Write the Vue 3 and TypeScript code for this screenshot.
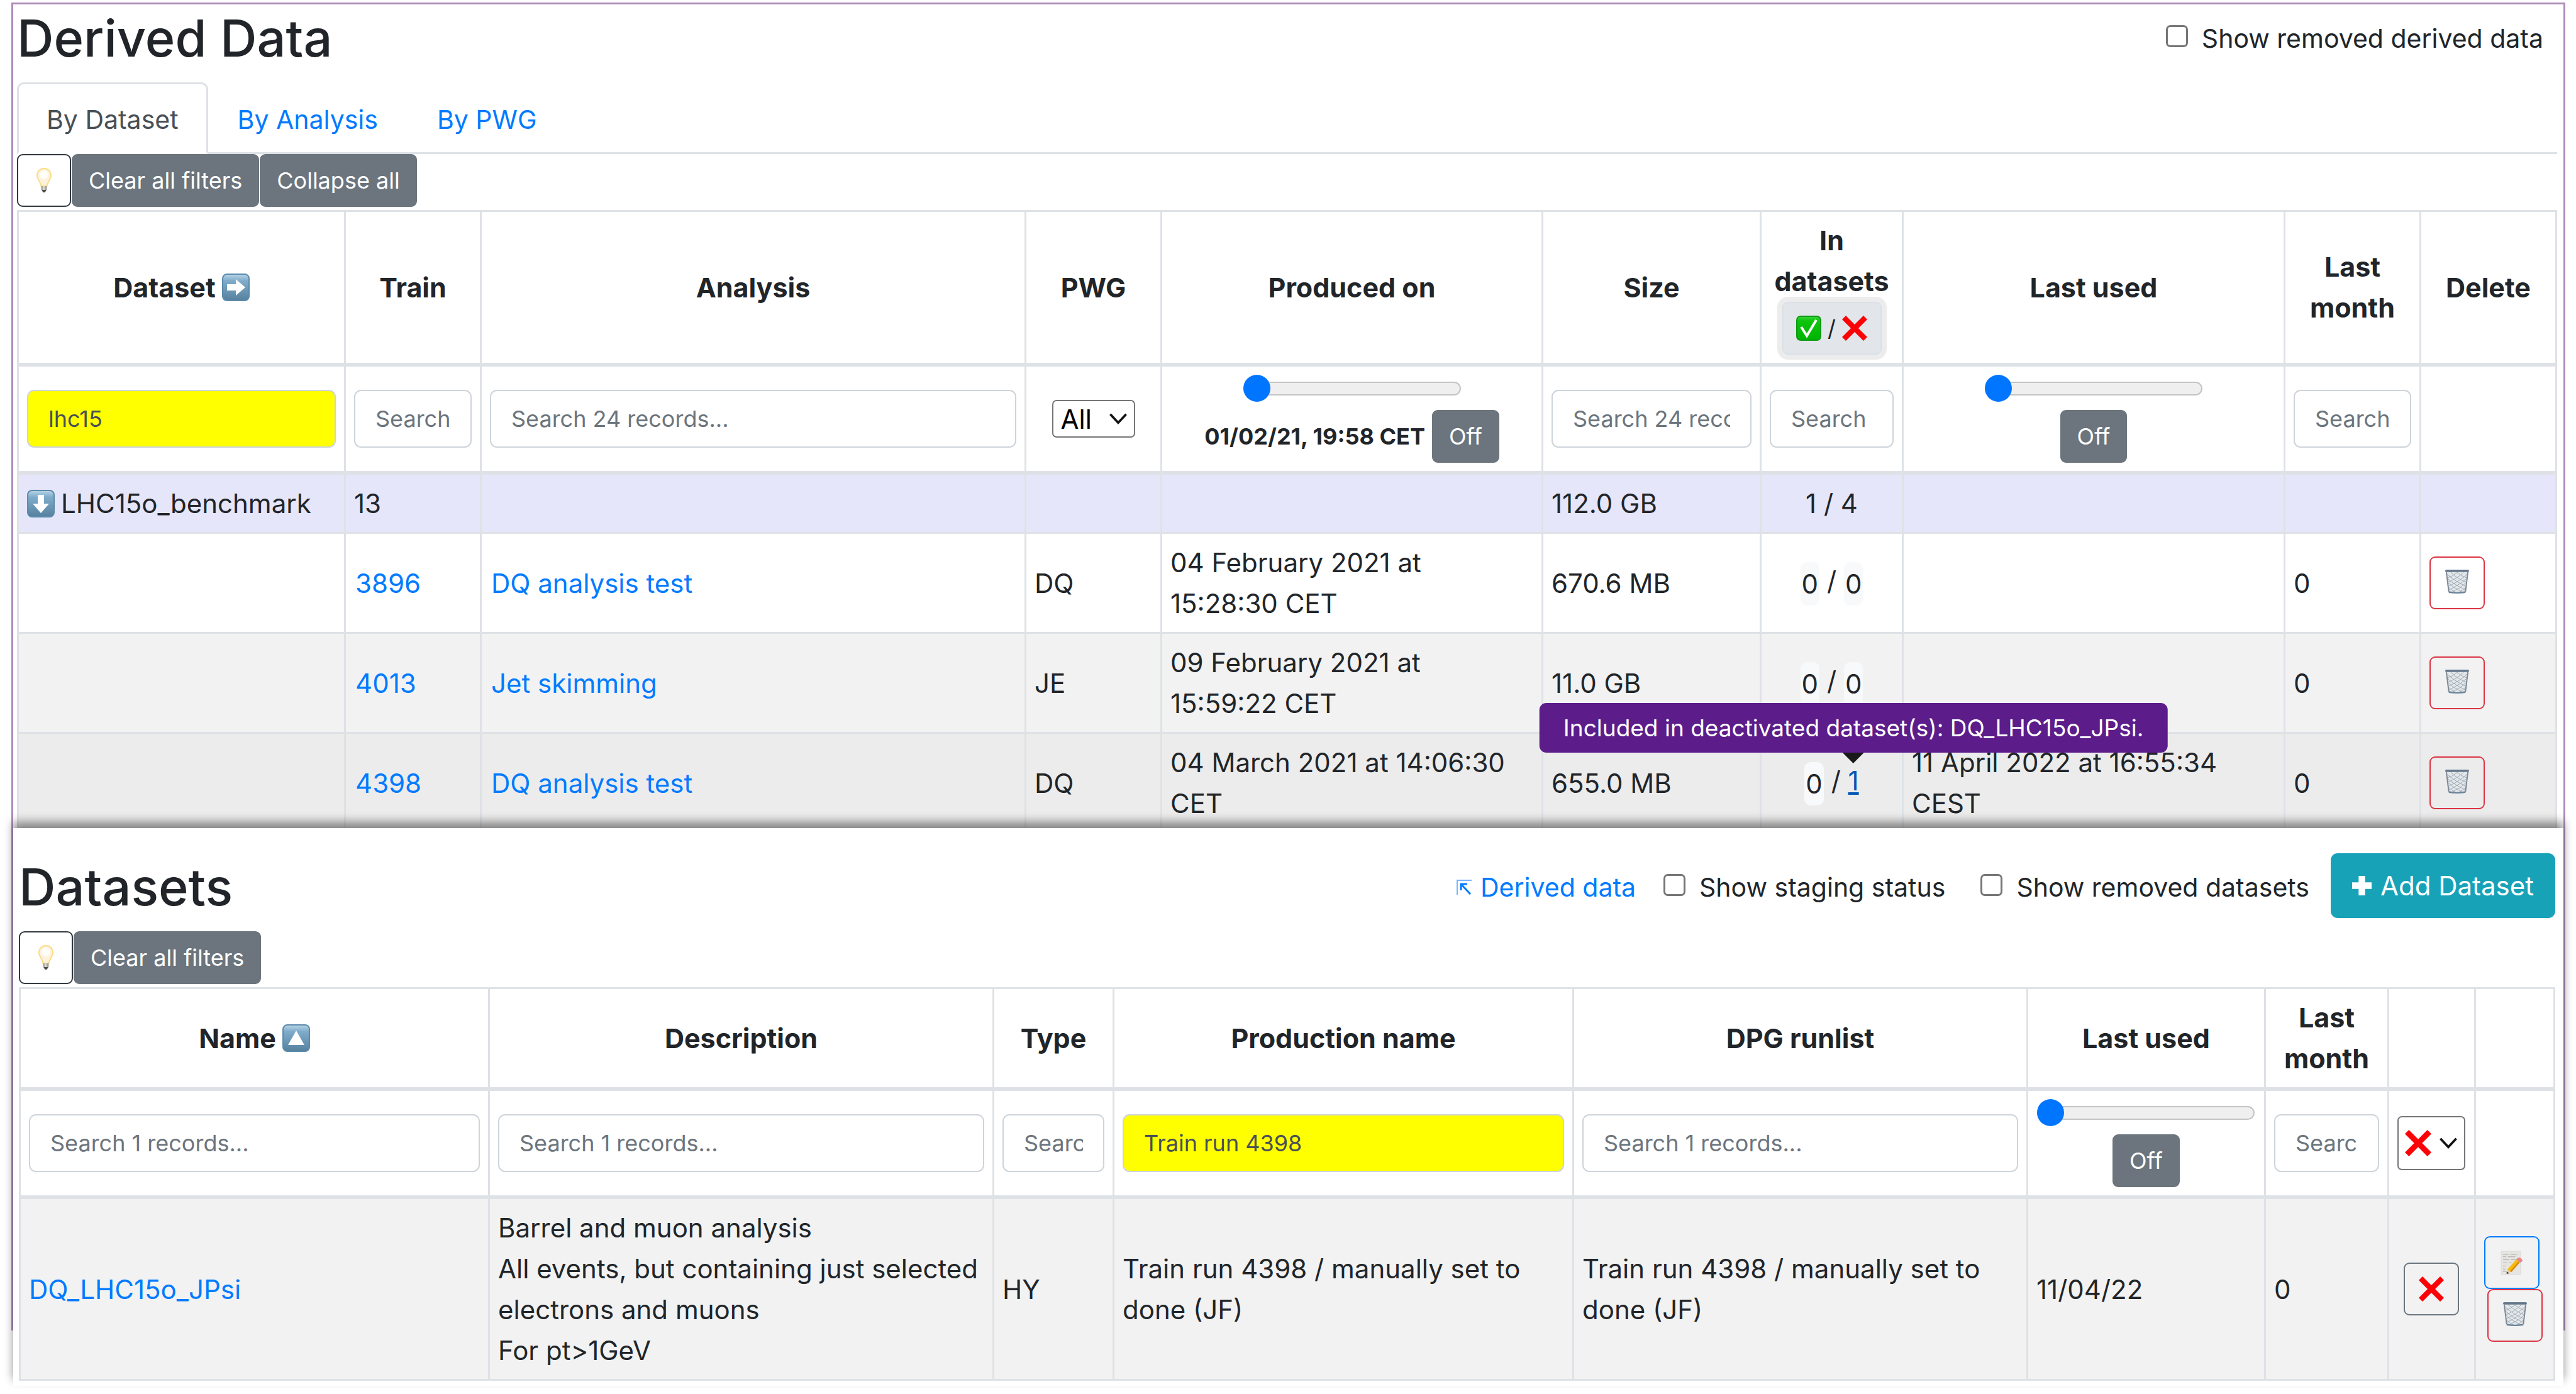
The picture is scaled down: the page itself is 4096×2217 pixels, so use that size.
<script setup lang="ts">
import { h, ref, type FunctionalComponent } from 'vue'

interface DerivedRow {
  train: string
  analysis: string
  pwg: string
  produced: string
  size: string
  active: string
  inactive: string
  tooltip?: string
  lastUsed: string
  lastMonth: string
}

const derivedCols = [520, 216, 866, 216, 606, 347, 226, 607, 216, 216]
const datasetCols = [746, 802, 191, 731, 722, 378, 196, 138, 126]

function shares(cols: number[]): string[] {
  const total = cols.reduce((a, b) => a + b, 0)
  return cols.map((c) => `${(c / total) * 100}%`)
}

const rows: DerivedRow[] = [
  { train: '3896', analysis: 'DQ analysis test', pwg: 'DQ', produced: '04 February 2021 at 15:28:30 CET', size: '670.6 MB', active: '0', inactive: '0', lastUsed: '', lastMonth: '0' },
  { train: '4013', analysis: 'Jet skimming', pwg: 'JE', produced: '09 February 2021 at 15:59:22 CET', size: '11.0 GB', active: '0', inactive: '0', lastUsed: '', lastMonth: '0' },
  { train: '4398', analysis: 'DQ analysis test', pwg: 'DQ', produced: '04 March 2021 at 14:06:30 CET', size: '655.0 MB', active: '0', inactive: '1', tooltip: 'Included in deactivated dataset(s): DQ_LHC15o_JPsi.', lastUsed: '11 April 2022 at 16:55:34 CEST', lastMonth: '0' },
]

const datasetFilter = ref('lhc15')
const productionFilter = ref('Train run 4398')
const producedOn = ref(0)
const derivedLastUsed = ref(0)
const datasetLastUsed = ref(0)

const CrossIcon: FunctionalComponent = () =>
  h('svg', { viewBox: '0 0 40 40', 'aria-hidden': 'true' }, [
    h('path', { d: 'M6 0 20 14 34 0 40 6 26 20 40 34 34 40 20 26 6 40 0 34 14 20 0 6Z', fill: '#fb0207' }),
  ])

const BulbIcon: FunctionalComponent = () =>
  h('svg', { viewBox: '0 0 24 40', 'aria-hidden': 'true' }, [
    h('path', { d: 'M12 1C5.500 1 1 5.700 1 12c0 6 5 9.500 6.500 17h9C18 21.500 23 18 23 12 23 5.700 18.500 1 12 1Z', fill: '#fdf3dc', stroke: '#fbdc86', 'stroke-width': 2 }),
    h('ellipse', { cx: 12, cy: 11, rx: 7, ry: 7, fill: '#fffdf8' }),
    h('path', { d: 'M7.500 29h9v5.500L14 38h-4l-2.500-3.500Z', fill: '#a8a19a' }),
    h('path', { d: 'M10 29h3v6h-3Z', fill: '#dcd8d2' }),
    h('path', { d: 'M8.500 35h7L13.500 39h-3Z', fill: '#4c4c4c' }),
  ])

const TrashIcon: FunctionalComponent = () =>
  h('svg', { viewBox: '0 0 40 40', 'aria-hidden': 'true' }, [
    h('path', { d: 'M2 3h36l-4 35q-14 3-28 0Z', fill: '#e3e7ea' }),
    h('path', {
      d: 'M3 7q9 10 32 21M3 14q10 10 31 20M4 21q10 10 24 16M5 29q6 6 12 9M9 4q12 12 27 17M19 4q8 7 18 10M37 7Q28 17 5 28M37 14Q26 24 6 34M36 21Q26 31 12 37M35 29q-6 6-12 9M31 4Q19 16 4 21M21 4Q13 11 3 14',
      stroke: '#9aa6b0', 'stroke-width': 1, fill: 'none',
    }),
    h('path', { d: 'M2 4 6 37M38 4 34 37', stroke: '#7d8894', 'stroke-width': 2, fill: 'none' }),
    h('rect', { x: 0, y: 0, width: 40, height: 4, rx: 2, fill: '#66798c' }),
    h('path', { d: 'M6 36q14 3 28 0v3q-14 2-28 0Z', fill: '#6c8499' }),
  ])

const arrowPaths: Record<string, string> = {
  right: 'M8 17h14v-8l15 13-15 13v-8H8Z',
  down: 'M17 8h10v14h8L22 37 9 22h8Z',
  up: 'M22 10 35 33H9Z',
}

const TileIcon: FunctionalComponent<{ dir: string }> = (props) =>
  h('svg', { viewBox: '0 0 44 44', 'aria-hidden': 'true' }, [
    h('defs', [
      h('linearGradient', { id: `tile-${props.dir}`, x1: 0, y1: 0, x2: 0, y2: 1 }, [
        h('stop', { offset: '0', 'stop-color': '#b9d6e8' }),
        h('stop', { offset: '.25', 'stop-color': '#7facca' }),
        h('stop', { offset: '1', 'stop-color': '#55819f' }),
      ]),
    ]),
    h('rect', { x: 1, y: 1, width: 42, height: 42, rx: 7, fill: `url(#tile-${props.dir})`, stroke: '#5c8bab', 'stroke-width': 2 }),
    h('path', { d: arrowPaths[props.dir], fill: '#fff' }),
  ])
TileIcon.props = ['dir']

const Chevron: FunctionalComponent = () =>
  h('svg', { viewBox: '0 0 32 20', 'aria-hidden': 'true' }, [
    h('path', { d: 'M2 2 16 17 30 2', fill: 'none', stroke: '#111', 'stroke-width': 4 }),
  ])
</script>

<template>
  <main class="page">
    <section class="derived">
      <header class="bar">
        <h2>Derived Data</h2>
        <label class="check"><input type="checkbox" /><span>Show removed derived data</span></label>
      </header>

      <nav class="tabs">
        <a href="#dataset" class="tab active">By Dataset</a>
        <a href="#analysis" class="tab">By Analysis</a>
        <a href="#pwg" class="tab">By PWG</a>
      </nav>

      <div class="toolbar">
        <button type="button" class="btn bulb" aria-label="Tips"><BulbIcon class="bulb-icon" /></button>
        <button type="button" class="btn grey">Clear all filters</button>
        <button type="button" class="btn grey">Collapse all</button>
      </div>

      <table>
        <colgroup>
          <col v-for="(w, i) in shares(derivedCols)" :key="i" :style="{ width: w }" />
        </colgroup>
        <thead>
          <tr>
            <th><span class="sorted">Dataset <TileIcon dir="right" class="tile" /></span></th>
            <th>Train</th>
            <th>Analysis</th>
            <th>PWG</th>
            <th>Produced on</th>
            <th>Size</th>
            <th class="tight">
              In datasets
              <button type="button" class="btn state" aria-label="Activated or deactivated">
                <svg class="mark" viewBox="0 0 40 40" aria-hidden="true">
                  <defs>
                    <linearGradient id="tick" x1="0" y1="0" x2="0" y2="1">
                      <stop offset="0" stop-color="#3fd23f" />
                      <stop offset=".2" stop-color="#0cc40c" />
                      <stop offset="1" stop-color="#00b400" />
                    </linearGradient>
                  </defs>
                  <rect x="1" y="1" width="38" height="38" rx="6" fill="url(#tick)" stroke="#0d9a12" stroke-width="2" />
                  <path d="M8 18 17 32 32 7" fill="none" stroke="#fff" stroke-width="4" />
                </svg>
                <span>/</span>
                <CrossIcon class="mark" />
              </button>
            </th>
            <th>Last used</th>
            <th>Last month</th>
            <th>Delete</th>
          </tr>
          <tr class="filters">
            <td><input v-model="datasetFilter" type="text" class="field filled" aria-label="Dataset" /></td>
            <td><input type="text" class="field" placeholder="Search" aria-label="Train" /></td>
            <td><input type="text" class="field" placeholder="Search 24 records..." aria-label="Analysis" /></td>
            <td>
              <span class="picker">
                <select class="select" aria-label="PWG"><option>All</option></select>
                <Chevron class="chevron" />
              </span>
            </td>
            <td>
              <div class="slider">
                <input v-model="producedOn" type="range" min="0" max="100" aria-label="Produced on" />
                <div class="slider-foot"><strong>01/02/21, 19:58 CET</strong><button type="button" class="btn grey">Off</button></div>
              </div>
            </td>
            <td><input type="text" class="field" placeholder="Search 24 records..." aria-label="Size" /></td>
            <td><input type="text" class="field" placeholder="Search" aria-label="In datasets" /></td>
            <td>
              <div class="slider">
                <input v-model="derivedLastUsed" type="range" min="0" max="100" aria-label="Last used" />
                <div class="slider-foot"><button type="button" class="btn grey">Off</button></div>
              </div>
            </td>
            <td><input type="text" class="field" placeholder="Search" aria-label="Last month" /></td>
            <td></td>
          </tr>
        </thead>
        <tbody>
          <tr class="group">
            <td><span class="sorted"><TileIcon dir="down" class="tile" /> LHC15o_benchmark</span></td>
            <td>13</td>
            <td></td>
            <td></td>
            <td></td>
            <td>112.0 GB</td>
            <td class="centre">1 / 4</td>
            <td></td>
            <td></td>
            <td></td>
          </tr>
          <tr v-for="row in rows" :key="row.train" :class="{ hovered: row.tooltip }">
            <td></td>
            <td><a href="#train" class="run">{{ row.train }}</a></td>
            <td><a href="#analysis" class="run">{{ row.analysis }}</a></td>
            <td>{{ row.pwg }}</td>
            <td>{{ row.produced }}</td>
            <td>{{ row.size }}</td>
            <td class="centre">
              <span class="pill">{{ row.active }}</span> /
              <span v-if="row.tooltip" class="anchor">
                <a href="#dataset" class="focused">{{ row.inactive }}</a>
                <span class="tooltip" role="tooltip">{{ row.tooltip }}</span>
              </span>
              <span v-else class="pill">{{ row.inactive }}</span>
            </td>
            <td>{{ row.lastUsed }}</td>
            <td>{{ row.lastMonth }}</td>
            <td><button type="button" class="btn icon red" aria-label="Delete"><TrashIcon class="trash" /></button></td>
          </tr>
        </tbody>
      </table>
    </section>

    <section class="datasets">
      <header class="bar">
        <h2>Datasets</h2>
        <div class="options">
          <a href="#derived" class="back">
            <svg viewBox="0 0 24 24" aria-hidden="true">
              <path d="M1 24V1H24" fill="none" stroke="#78b4ff" stroke-width="2" />
              <path d="M7 17V7H17M7 7 22 23" fill="none" stroke="#007bff" stroke-width="3" />
            </svg>
            Derived data
          </a>
          <label class="check"><input type="checkbox" /><span>Show staging status</span></label>
          <label class="check"><input type="checkbox" /><span>Show removed datasets</span></label>
          <button type="button" class="add">
            <svg viewBox="0 0 30 30" aria-hidden="true"><path d="M10 0H20V10H30V20H20V30H10V20H0V10H10Z" fill="#fff" /></svg>
            Add Dataset
          </button>
        </div>
      </header>

      <div class="toolbar">
        <button type="button" class="btn bulb" aria-label="Tips"><BulbIcon class="bulb-icon" /></button>
        <button type="button" class="btn grey">Clear all filters</button>
      </div>

      <table>
        <colgroup>
          <col v-for="(w, i) in shares(datasetCols)" :key="i" :style="{ width: w }" />
        </colgroup>
        <thead>
          <tr>
            <th><span class="sorted">Name <TileIcon dir="up" class="tile" /></span></th>
            <th>Description</th>
            <th>Type</th>
            <th>Production name</th>
            <th>DPG runlist</th>
            <th>Last used</th>
            <th>Last month</th>
            <th></th>
            <th></th>
          </tr>
          <tr class="filters">
            <td><input type="text" class="field" placeholder="Search 1 records..." aria-label="Name" /></td>
            <td><input type="text" class="field" placeholder="Search 1 records..." aria-label="Description" /></td>
            <td><input type="text" class="field" placeholder="Search" aria-label="Type" /></td>
            <td><input v-model="productionFilter" type="text" class="field filled" aria-label="Production name" /></td>
            <td><input type="text" class="field" placeholder="Search 1 records..." aria-label="DPG runlist" /></td>
            <td>
              <div class="slider">
                <input v-model="datasetLastUsed" type="range" min="0" max="100" aria-label="Last used" />
                <div class="slider-foot"><button type="button" class="btn grey">Off</button></div>
              </div>
            </td>
            <td><input type="text" class="field" placeholder="Search" aria-label="Last month" /></td>
            <td>
              <span class="picker">
                <select class="select state-select" aria-label="Activated"><option value="off"></option></select>
                <CrossIcon class="mark picked" />
                <Chevron class="chevron" />
              </span>
            </td>
            <td></td>
          </tr>
        </thead>
        <tbody>
          <tr class="shaded">
            <td><a href="#dataset">DQ_LHC15o_JPsi</a></td>
            <td>Barrel and muon analysis<br />All events, but containing just selected electrons and muons<br />For pt&gt;1GeV</td>
            <td>HY</td>
            <td>Train run 4398 / manually set to done (JF)</td>
            <td>Train run 4398 / manually set to done (JF)</td>
            <td>11/04/22</td>
            <td>0</td>
            <td class="centre"><button type="button" class="btn icon dim" aria-label="Activate"><CrossIcon class="mark" /></button></td>
            <td>
              <div class="actions">
                <button type="button" class="btn icon blue" aria-label="Edit">
                  <svg class="memo" viewBox="0 0 36 40" aria-hidden="true">
                    <path d="M1 1H33V39H1Z" fill="#e6e5e2" stroke="#dadada" />
                    <path d="M4 6h9m3 0h11M4 10h5m3 0h12M4 15h10m3 0h10M4 20h7m3 0h4M4 25h5M4 30h4M4 34h5" stroke="#a5a5a5" stroke-width="1" />
                    <path d="M11 31 26 14l5 5-14 16Z" fill="#f9b90d" />
                    <path d="M15 34 29 18l2 2-13 15Z" fill="#d98d0c" />
                    <path d="M26 14l2-2 6 5-2 3Z" fill="#9ba3ad" />
                    <path d="M28 12q3-2 6 1t1 5l-2 1-6-5Z" fill="#f0808a" />
                    <path d="M11 31l6 4-7 3Z" fill="#ecd0a0" />
                    <path d="M10 34l4 3-4 1Z" fill="#333" />
                  </svg>
                </button>
                <button type="button" class="btn icon red" aria-label="Delete"><TrashIcon class="trash" /></button>
              </div>
            </td>
          </tr>
        </tbody>
      </table>
    </section>
  </main>
</template>

<style>
body {
  margin: 0;
  background: #fff;
}
</style>

<style scoped>
.page {
  display: grid;
  grid-template-columns: minmax(0, 1fr);
  grid-template-rows: 1313px 799px auto;
  padding: 4px 17px 16px 18px;
  overflow: hidden;
  font-family: Inter, "Liberation Sans", sans-serif;
  font-size: 42px;
  line-height: 65px;
  color: #212529;
}

.page *,
.page *::before,
.page *::after {
  box-sizing: border-box;
}

.derived {
  grid-area: 1 / 1 / 3 / 2;
  min-height: 0;
  border: 3px solid #ae8cba;
  padding: 0 10px 0 6px;
}

.datasets {
  grid-area: 2 / 1 / 4 / 2;
  z-index: 1;
  margin: 0 3px;
  padding: 0 13px 8px 9px;
  background: #fff;
  box-shadow: 0 -10px 14px rgba(0, 0, 0, 0.43);
}

.bar {
  display: flex;
  justify-content: space-between;
  align-items: center;
  font-size: 41px;
}

.derived .bar {
  height: 124px;
  padding-right: 22px;
  padding-bottom: 16px;
}

.datasets .bar {
  height: 164px;
  padding-top: 24px;
}

h2 {
  margin: 0;
  font-size: 81px;
  line-height: 104px;
  font-weight: 500;
}

a {
  color: #007bff;
  text-decoration: none;
}

button,
input,
select {
  margin: 0;
  font-family: inherit;
}

.options {
  display: flex;
  align-items: center;
}

.check {
  display: inline-flex;
  align-items: center;
  gap: 22px;
}

.check input {
  appearance: none;
  width: 35px;
  height: 35px;
  margin-bottom: 8px;
  border: 3px solid #767676;
  border-radius: 7px;
  background: #fff;
}

.options .check {
  margin-left: 44px;
}

.options .check + .check {
  margin-left: 56px;
}

.back {
  display: inline-flex;
  align-items: center;
  gap: 14px;
}

.back svg {
  width: 24px;
  height: 24px;
}

.add {
  display: flex;
  align-items: center;
  gap: 14px;
  height: 103px;
  margin-bottom: 6px;
  margin-left: 34px;
  padding: 0 34px;
  border: 0;
  border-radius: 11px;
  background: #17a2b8;
  color: #fff;
  font-size: 42px;
}

.add svg {
  width: 31px;
  height: 31px;
}

.tabs {
  display: flex;
  border-bottom: 3px solid #dee2e6;
  font-size: 41px;
}

.tab {
  margin-bottom: -3px;
  padding: 24px 44px 19px;
  border: 3px solid transparent;
  border-radius: 11px 11px 0 0;
}

.tab.active {
  border-color: #dee2e6 #dee2e6 #fff;
  background: #fff;
  color: #495057;
}

.toolbar {
  display: flex;
  gap: 1px;
  margin-bottom: 5px;
}

.btn {
  display: inline-flex;
  justify-content: center;
  align-items: center;
  height: 84px;
  padding: 0 25px;
  border: 2px solid #6c757d;
  border-radius: 9px;
  background: transparent;
  color: inherit;
  font-size: 36px;
  line-height: 57px;
  vertical-align: middle;
}

.btn.grey {
  background: #6c757d;
  color: #fff;
}

.btn.bulb {
  width: 86px;
  border-color: #343a40;
}

.bulb-icon {
  width: 24px;
  height: 40px;
}

.btn.icon {
  width: 88px;
  padding: 0;
}

.btn.red {
  border-color: #dc3545;
}

.btn.blue {
  border-color: #007bff;
}

.trash {
  width: 38px;
  height: 38px;
  margin-bottom: 4px;
}

.memo {
  width: 35px;
  height: 39px;
}

.mark {
  width: 40px;
  height: 40px;
}

.btn.state {
  gap: 10px;
  width: 158px;
  padding: 0;
  border-color: #dae0e5;
  background: #e2e6ea;
  box-shadow: 0 0 0 8px #ececed;
}

table {
  width: 100%;
  table-layout: fixed;
  border-collapse: collapse;
}

th,
td {
  padding: 13px;
  border: 3px solid #dee2e6;
  text-align: left;
  vertical-align: middle;
}

th {
  font-size: 43px;
  font-weight: 700;
  text-align: center;
}

thead th,
thead td {
  border-bottom-width: 6px;
}

th.tight {
  padding-right: 8px;
  padding-left: 8px;
}

.filters td {
  text-align: center;
}

.centre {
  text-align: center;
}

.run {
  padding-left: 2px;
}

.sorted {
  display: inline-flex;
  align-items: center;
  gap: 10px;
  vertical-align: top;
}

.tile {
  width: 44px;
  height: 44px;
}

.field {
  display: block;
  width: 100%;
  height: 92px;
  padding: 0 32px;
  border: 2px solid #ced4da;
  border-radius: 11px;
  background: #fff;
  color: #495057;
  font-size: 36px;
}

.field::placeholder {
  color: #6c757d;
  opacity: 1;
}

.field.filled {
  background: #ff0;
}

.picker {
  position: relative;
  display: flex;
  align-items: center;
  width: max-content;
  margin: 0 auto;
}

.select {
  appearance: none;
  width: 132px;
  height: 60px;
  padding: 0 12px;
  border: 2px solid #767676;
  border-radius: 7px;
  background: #fff;
  color: #000;
  font-size: 42px;
}

.state-select {
  width: 108px;
  height: 86px;
}

.chevron {
  position: absolute;
  right: 12px;
  width: 30px;
  height: 18px;
  pointer-events: none;
}

.picked {
  position: absolute;
  left: 12px;
  width: 42px;
  height: 42px;
  pointer-events: none;
}

.slider {
  display: flex;
  flex-direction: column;
  align-items: center;
  gap: 13px;
}

.slider input {
  appearance: none;
  width: 346px;
  height: 43px;
  background: transparent;
}

.slider input::-webkit-slider-runnable-track {
  height: 22px;
  border: 2px solid #c4c4c4;
  border-radius: 11px;
  background: #efefef;
}

.slider input::-webkit-slider-thumb {
  appearance: none;
  width: 43px;
  height: 43px;
  margin: -13px -2px;
  border-radius: 50%;
  background: #0075ff;
}

.slider-foot {
  display: flex;
  align-items: center;
  gap: 11px;
}

.slider-foot strong {
  font-size: 36px;
  line-height: 57px;
  font-weight: 700;
}

.group {
  background: #e6e6fa;
}

tbody tr:nth-child(3),
.shaded {
  background: #f2f2f2;
}

tbody .hovered {
  background: #ececec;
}

.pill {
  display: inline-block;
  padding: 2px;
  border-radius: 10px;
  background: #f8f9fa;
  vertical-align: middle;
}

.anchor {
  position: relative;
  display: inline-block;
}

.focused {
  color: #0056b3;
  text-decoration: underline;
}

.tooltip {
  position: absolute;
  left: 50%;
  bottom: 100%;
  transform: translateX(-50%);
  margin-bottom: 12px;
  padding: 11px 38px;
  border-radius: 11px;
  background: #5c1d8b;
  color: #fff;
  font-size: 37px;
  line-height: 57px;
  white-space: nowrap;
}

.tooltip::after {
  content: "";
  position: absolute;
  left: 50%;
  top: 100%;
  margin-left: -17px;
  border: 17px solid transparent;
  border-top-color: #1a1a1a;
  border-bottom-width: 0;
}

.actions {
  display: flex;
  flex-direction: column;
}

.actions .red {
  margin-left: 5px;
}
</style>
